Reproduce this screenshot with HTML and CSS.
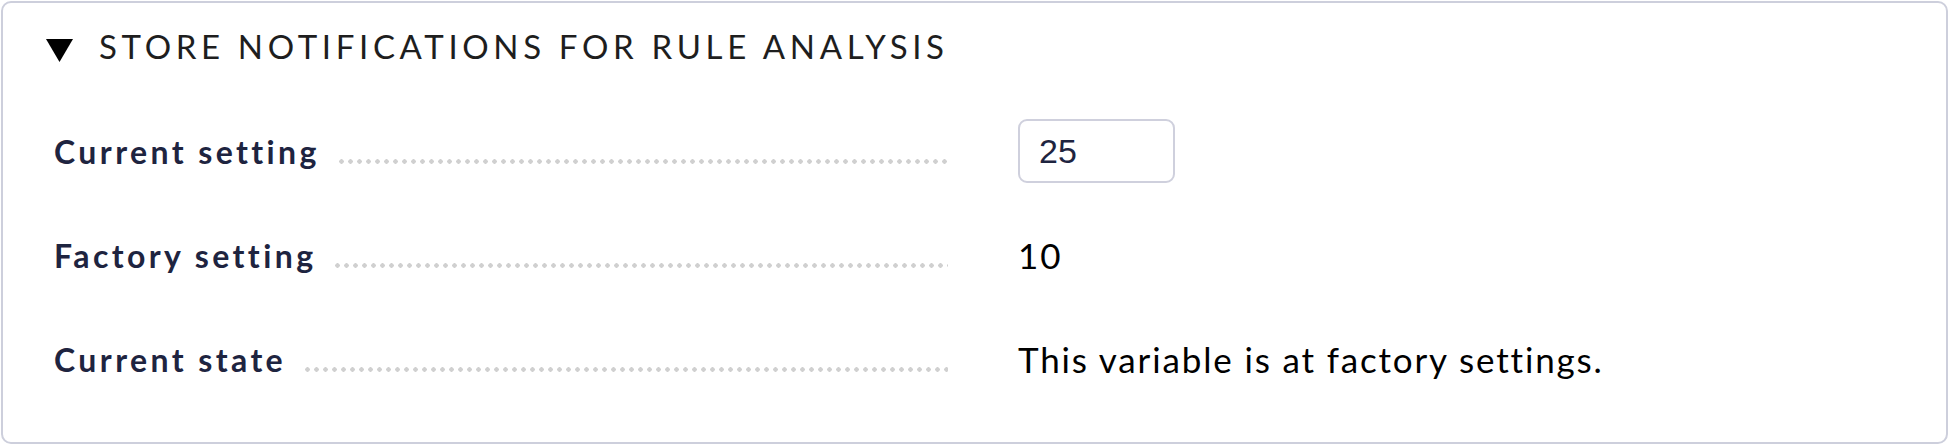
FILE: index.html
```html
<!DOCTYPE html>
<html>
<head>
<meta charset="utf-8">
<link rel="stylesheet" href="styles.css">
</head>
<body>
<div class="box">
  <div class="header">
    <svg class="toggle" width="27" height="23" viewBox="0 0 27 23"><polygon points="0,0 27,0 13.5,23" fill="#000"/></svg>
    <span class="title">STORE NOTIFICATIONS FOR RULE ANALYSIS</span>
  </div>
  <div class="rows">
    <div class="row">
      <div class="label-cell"><span class="label">Current setting</span><span class="leader"></span></div>
      <div class="value"><input class="num" type="text" value="25"></div>
    </div>
    <div class="row">
      <div class="label-cell"><span class="label">Factory setting</span><span class="leader"></span></div>
      <div class="value">10</div>
    </div>
    <div class="row">
      <div class="label-cell"><span class="label">Current state</span><span class="leader"></span></div>
      <div class="value">This variable is at factory settings.</div>
    </div>
  </div>
</div>
</body>
</html>
```

FILE: styles.css
```css
html, body {
  margin: 0;
  padding: 0;
  background: #fff;
}
body {
  font-family: Lato, "Noto Sans", sans-serif;
}
.box {
  box-sizing: border-box;
  margin: 1px 2px 1px 1px;
  height: 443px;
  border: 2px solid #cdcfdc;
  border-radius: 10px;
  background: #fff;
}
.header {
  height: 86px;
  display: flex;
  align-items: center;
}
.toggle {
  margin-left: 43px;
  margin-top: 8px;
  flex: none;
}
.title {
  margin-left: 26px;
  font-size: 33px;
  font-weight: 400;
  letter-spacing: 4.65px;
  color: #1e1e1e;
}
.rows {
  padding-top: 10px;
}
.row {
  height: 104px;
  display: grid;
  grid-template-columns: 894px 1fr;
  column-gap: 70px;
  align-items: center;
  padding-left: 51px;
}
.label-cell {
  display: flex;
  align-items: baseline;
}
.label {
  font-size: 32px;
  font-weight: 700;
  letter-spacing: 3.4px;
  color: #1e2440;
  white-space: nowrap;
}
.leader {
  flex: 1;
  margin-left: 17px;
  height: 5px;
  background-image: radial-gradient(circle, #d0d0d0 2px, transparent 2.5px);
  background-size: 9px 5px;
  background-repeat: repeat-x;
  background-position: left center;
}
.value {
  font-size: 35px;
  letter-spacing: 1.85px;
  color: #000;
}
.num {
  box-sizing: border-box;
  width: 157px;
  height: 64px;
  border: 2px solid #cfd0dd;
  border-radius: 9px;
  padding: 0 0 0 19px;
  font-family: "Liberation Sans", Arial, sans-serif;
  font-size: 34px;
  letter-spacing: 0;
  color: #1e2440;
  outline: none;
  background: #fff;
}
```
